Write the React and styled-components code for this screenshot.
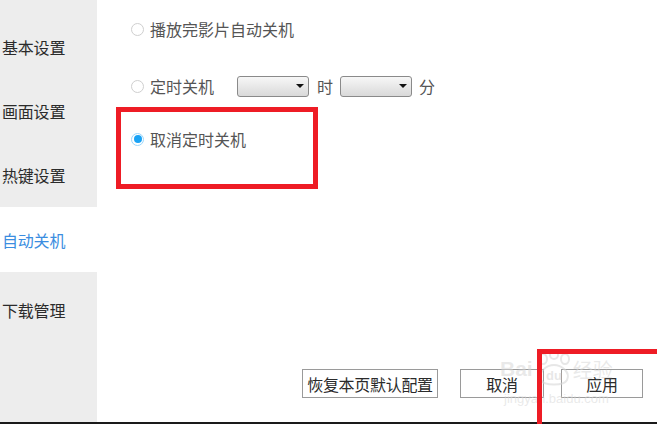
import styled, { createGlobalStyle } from "styled-components";

const GlobalStyle = createGlobalStyle`
  html, body {
    margin: 0;
    padding: 0;
    background: #fff;
  }
  body {
    font-family: "Noto Sans CJK SC", "Microsoft YaHei", sans-serif;
  }
`;

const Page = styled.div`
  position: relative;
  width: 657px;
  height: 424px;
  overflow: hidden;
  display: flex;
  flex-direction: column;
`;

const Body = styled.div`
  flex: 1;
  display: flex;
  border-bottom: 2px solid #1a1a1a;
`;

const Sidebar = styled.div`
  width: 97px;
  background: #ededed;
  padding-top: 15px;
  display: flex;
  flex-direction: column;
`;

const NavItem = styled.div`
  height: ${(p) => p.$h}px;
  display: flex;
  align-items: center;
  padding-left: 2px;
  font-size: 16px;
  letter-spacing: -0.2px;
  color: ${(p) => (p.$active ? "#3b8de0" : "#2b2b2b")};
  background: ${(p) => (p.$active ? "#fff" : "transparent")};
`;

const Main = styled.div`
  flex: 1;
  display: flex;
  flex-direction: column;
  padding: 18px 14px 24px 34px;
`;

const Row = styled.div`
  height: 22px;
  margin-top: ${(p) => p.$mt}px;
  display: flex;
  align-items: center;
  font-size: 16px;
  color: #555;
`;

const Radio = styled.span`
  box-sizing: border-box;
  width: 13px;
  height: 13px;
  border-radius: 50%;
  margin-right: 6px;
  border: 1px solid ${(p) => (p.$checked ? "#9ad6fb" : "#cfcfcf")};
  background: #fff;
  display: inline-flex;
  align-items: center;
  justify-content: center;
  flex-shrink: 0;
  &::after {
    content: "";
    width: 8px;
    height: 8px;
    border-radius: 50%;
    background: ${(p) => (p.$checked ? "#1aa3f5" : "transparent")};
  }
`;

const Label = styled.span`
  width: ${(p) => (p.$w ? `${p.$w}px` : "auto")};
  line-height: 1;
`;

const Select = styled.div`
  box-sizing: border-box;
  width: 72px;
  height: 21px;
  border: 1px solid #8a8a8a;
  border-radius: 3px;
  background: linear-gradient(#f7f7f7, #d9d9d9);
  display: flex;
  align-items: center;
  justify-content: flex-end;
  padding-right: 4px;
  margin: 0 ${(p) => p.$mr}px 0 0;
`;

const Arrow = styled.span`
  width: 0;
  height: 0;
  border-left: 4px solid transparent;
  border-right: 4px solid transparent;
  border-top: 4px solid #111;
`;

const Unit = styled.span`
  margin-right: ${(p) => p.$mr}px;
  line-height: 1;
`;

const Spacer = styled.div`
  flex: 1;
`;

const Footer = styled.div`
  display: flex;
  justify-content: flex-end;
  align-items: center;
`;

const Button = styled.div`
  box-sizing: border-box;
  width: ${(p) => p.$w}px;
  height: 29px;
  margin-left: ${(p) => p.$ml}px;
  border: 1px solid #9a9a9a;
  background: #fff;
  display: flex;
  align-items: center;
  justify-content: center;
  font-size: 16px;
  color: #2b2b2b;
  white-space: nowrap;
  letter-spacing: -0.3px;
`;

const Mark = styled.div`
  position: absolute;
  left: ${(p) => p.$x}px;
  top: ${(p) => p.$y}px;
  width: ${(p) => p.$w}px;
  height: ${(p) => p.$h}px;
  box-sizing: border-box;
  border: 5px solid #ee1c25;
  pointer-events: none;
`;

const Watermark = styled.div`
  position: absolute;
  left: 500px;
  top: 350px;
  color: rgba(215, 215, 215, 0.55);
  font-family: "Liberation Sans", Arial, sans-serif;
  pointer-events: none;
  display: flex;
  flex-direction: column;
  align-items: flex-start;
`;

const WmTop = styled.div`
  display: flex;
  align-items: center;
  height: 38px;
`;

const WmBai = styled.span`
  font-size: 21px;
  font-weight: bold;
`;

const WmJing = styled.span`
  font-size: 20px;
  font-family: "Noto Sans CJK SC", sans-serif;
  margin-left: -4px;
`;

const WmUrl = styled.span`
  font-size: 13px;
  margin-top: 3px;
  margin-left: 4px;
`;

function Paw() {
  return (
    <svg width="44" height="38" viewBox="0 0 44 38">
      <g fill="none" stroke="rgba(215,215,215,0.6)" strokeWidth="2">
        <ellipse cx="10" cy="9" rx="4" ry="5" />
        <ellipse cx="21" cy="5" rx="4" ry="4" />
        <ellipse cx="32" cy="9" rx="4" ry="5" />
        <path d="M8 30 C4 22 14 15 21 15 C28 15 38 22 34 30 C31 36 11 36 8 30 Z" />
      </g>
      <text
        x="21"
        y="30"
        textAnchor="middle"
        fontSize="13"
        fontWeight="bold"
        fontFamily="Liberation Sans, Arial, sans-serif"
        fill="rgba(215,215,215,0.6)"
      >
        du
      </text>
    </svg>
  );
}

const navItems = [
  { name: "基本设置", h: 64 },
  { name: "画面设置", h: 64 },
  { name: "热键设置", h: 64 },
  { name: "自动关机", h: 65, active: true },
  { name: "下载管理", h: 75 },
];

export default function App() {
  return (
    <>
      <GlobalStyle />
      <Page>
        <Body>
          <Sidebar>
            {navItems.map((item) => (
              <NavItem key={item.name} $h={item.h} $active={item.active}>
                {item.name}
              </NavItem>
            ))}
          </Sidebar>
          <Main>
            <Row $mt={0}>
              <Radio />
              <Label>播放完影片自动关机</Label>
            </Row>
            <Row $mt={35}>
              <Radio />
              <Label $w={87}>定时关机</Label>
              <Select $mr={8}>
                <Arrow />
              </Select>
              <Unit $mr={7}>时</Unit>
              <Select $mr={7}>
                <Arrow />
              </Select>
              <Unit $mr={0}>分</Unit>
            </Row>
            <Row $mt={31}>
              <Radio $checked />
              <Label>取消定时关机</Label>
            </Row>
            <Spacer />
            <Footer>
              <Button $w={136} $ml={0}>
                恢复本页默认配置
              </Button>
              <Button $w={84} $ml={22}>
                取消
              </Button>
              <Button $w={82} $ml={17}>
                应用
              </Button>
            </Footer>
          </Main>
        </Body>
        <Watermark>
          <WmTop>
            <WmBai>Bai</WmBai>
            <Paw />
            <WmJing>经验</WmJing>
          </WmTop>
          <WmUrl>jingyan.baidu.com</WmUrl>
        </Watermark>
        <Mark $x={116} $y={107} $w={202} $h={82} />
        <Mark $x={537} $y={349} $w={125} $h={90} />
      </Page>
    </>
  );
}
